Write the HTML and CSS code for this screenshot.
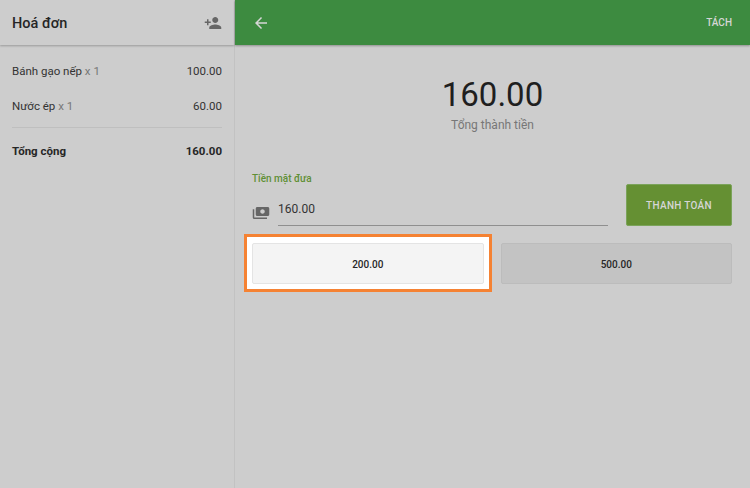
FILE: index.html
```html
<!DOCTYPE html>
<html lang="en">
<head>
  <meta charset="UTF-8">
  <meta name="viewport" content="width=device-width, initial-scale=1.0">
  <title>Hoá đơn</title>
  <link rel="stylesheet" href="styles.css">
</head>
<body>
  <div class="app">
    <aside class="bill">
      <header class="bill-header">
        <h2>Hoá đơn</h2>
        <svg class="icon" viewBox="0 0 24 24"><path d="M15 12c2.21 0 4-1.79 4-4s-1.79-4-4-4-4 1.79-4 4 1.79 4 4 4zm-9-2V7H4v3H1v2h3v3h2v-3h3v-2H6zm9 4c-2.67 0-8 1.34-8 4v2h16v-2c0-2.66-5.33-4-8-4z"/></svg>
      </header>
      <div class="bill-items">
        <div class="bill-row"><span>Bánh gạo nếp <span class="qty">x 1</span></span><span>100.00</span></div>
        <div class="bill-row"><span>Nước ép <span class="qty">x 1</span></span><span>60.00</span></div>
      </div>
      <div class="bill-total"><span>Tổng cộng</span><span>160.00</span></div>
    </aside>

    <main class="payment">
      <header class="topbar">
        <svg class="icon back" viewBox="0 0 24 24"><path d="M20 11H7.83l5.59-5.59L12 4l-8 8 8 8 1.41-1.41L7.83 13H20v-2z"/></svg>
        <span class="split">TÁCH</span>
      </header>

      <section class="amount">
        <div class="amount-value">160.00</div>
        <div class="amount-label">Tổng thành tiền</div>
      </section>

      <section class="cash">
        <div class="cash-field">
          <label class="cash-label">Tiền mặt đưa</label>
          <div class="cash-input">
            <svg class="icon cash-icon" viewBox="0 0 24 24"><path d="M5 14V6c0-1.1.9-2 2-2h14c1.100 0 2 .9 2 2v8c0 1.100-.9 2-2 2H7c-1.100 0-2-.9-2-2zm9-7c-1.660 0-3 1.340-3 3s1.340 3 3 3 3-1.340 3-3-1.340-3-3-3zM1 7v11c0 1.100.9 2 2 2h17v-2H3V7H1z"/></svg>
            <div class="cash-value">160.00</div>
          </div>
        </div>
        <button class="pay-btn">THANH TOÁN</button>
      </section>

      <section class="quick">
        <button class="quick-btn is-highlighted">200.00</button>
        <button class="quick-btn">500.00</button>
      </section>
    </main>
  </div>
</body>
</html>
```

FILE: styles.css
```css
html, body { height: 100%; }
body {
  margin: 0;
  background: #cdcdcd;
  font-family: Roboto, "Noto Sans", sans-serif;
  color: #212121;
  overflow: hidden;
}
.app { display: flex; height: 488px; }
.icon { width: 18px; height: 18px; fill: #666; display: block; }

.bill { width: 234px; border-right: 1px solid #c2c2c2; flex: none; }
.bill-header {
  height: 45px; padding: 0 12px; box-sizing: border-box;
  display: flex; align-items: center; justify-content: space-between;
  box-shadow: 0 1px 2px rgba(0, 0, 0, 0.25);
}
.bill-header h2 { margin: 1px 0 0; font-size: 14.5px; font-weight: 500; color: #262626; }
.bill-items { padding-top: 8px; margin: 0 12px; border-bottom: 1px solid #bfbfbf; padding-bottom: 4px; }
.bill-row {
  display: flex; justify-content: space-between; align-items: center;
  height: 35px; font-size: 11.5px; color: #333;
}
.bill-row .qty { color: #777; }
.bill-total {
  display: flex; justify-content: space-between; align-items: center;
  margin: 0 12px; height: 46px; font-size: 11.5px; font-weight: 700; color: #262626;
}

.payment { flex: 1; min-width: 0; }
.topbar {
  height: 45px; background: #3d8b40; padding: 0 18px 0 17px;
  display: flex; align-items: center; justify-content: space-between;
  box-shadow: 0 1px 2px rgba(0, 0, 0, 0.3);
}
.back { fill: #d6d6d6; }
.split { font-size: 10px; font-weight: 500; color: #d6d6d6; }

.amount { text-align: center; padding-top: 30px; }
.amount-value { font-size: 33px; line-height: 40px; color: #1f1f1f; }
.amount-label { font-size: 12px; line-height: 16px; color: #777; margin-top: 2px; }

.cash { display: flex; gap: 18px; padding: 40px 18px 0 17px; align-items: flex-end; }
.cash-field { flex: 1; min-width: 0; }
.cash-label { display: block; font-size: 10px; font-weight: 500; line-height: 12px; color: #5f8f35; margin-bottom: 14px; }
.cash-input { display: flex; align-items: center; gap: 8px; }
.cash-value {
  flex: 1; height: 26px; line-height: 21px; font-size: 12px; color: #333;
  border-bottom: 1px solid #8f8f8f;
}
.pay-btn {
  width: 106px; height: 42px; padding: 0; flex: none;
  background: #659033; border: 1px solid #7ba35a; border-radius: 2px;
  font: 500 10px Roboto, sans-serif; letter-spacing: 0.3px; color: #d6d6d6;
}

.quick { display: flex; gap: 17px; padding: 17px 18px 0 17px; isolation: isolate; }
.quick-btn {
  flex: 1; height: 41px; padding: 2px 0 0;
  background: #c3c3c3; border: 1px solid #bcbcbc; border-radius: 2px;
  font: 500 10px Roboto, sans-serif; color: #262626;
}
.quick-btn.is-highlighted { position: relative; background: #f4f4f4; border-color: #e4e4e4; }
.quick-btn.is-highlighted::before {
  content: ""; position: absolute; z-index: -1;
  top: -10px; left: -9px; right: -9.5px; bottom: -9px;
  background: #fff; border: 3px solid #f58233;
}
```
